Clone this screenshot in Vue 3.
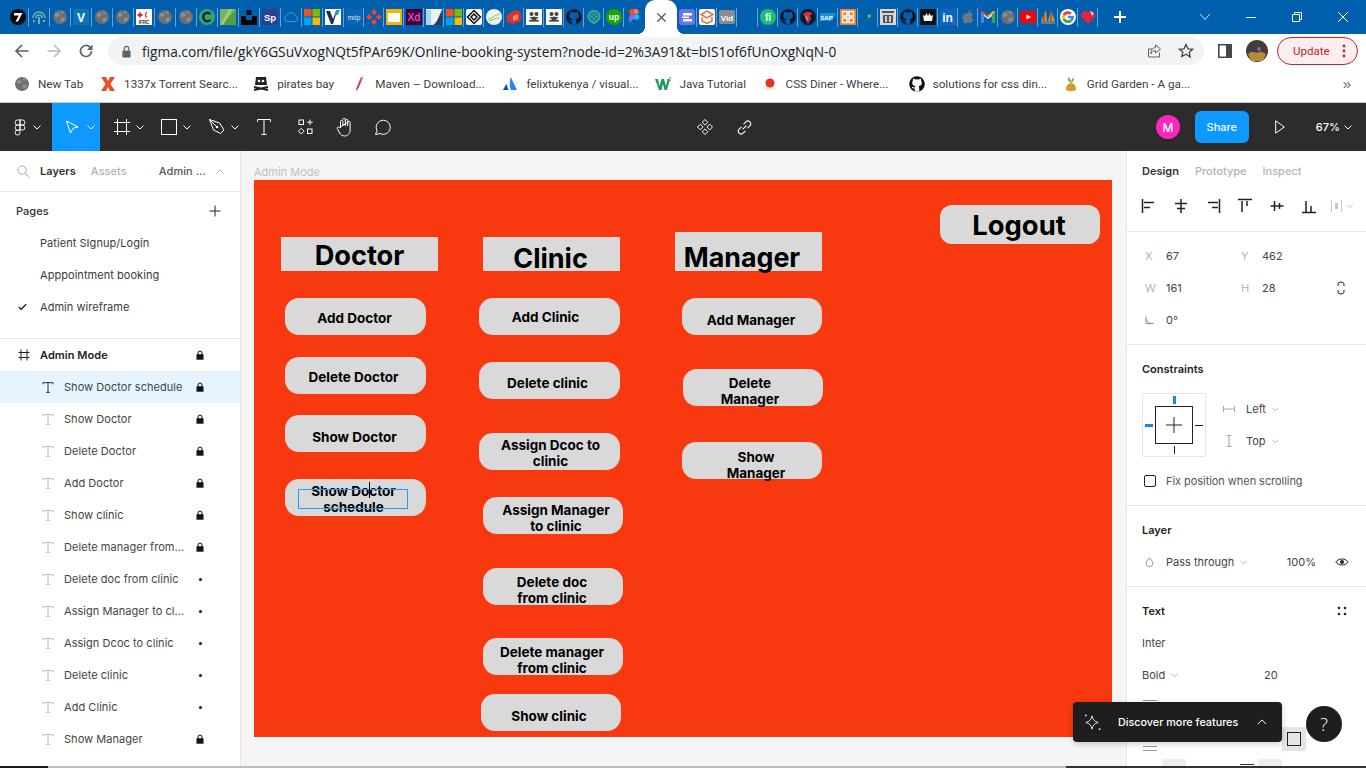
<script setup>
const globe = '<circle cx="8" cy="8" r="7" fill="#6c7075"/><path d="M3 4.5C5 3 6.500 4 7.500 5S6.500 7.500 5 8 2.500 7 3 4.500zM9 9c2-1 4-.5 4 .5s-2 3.500-3 3.500-2-3-1-4zM9 2l3 1-1 2-2-1z" fill="#8c9094"/>'
const bee = '<rect x="0" y="0" width="16" height="16" fill="#fff"/><g fill="#444"><circle cx="5.500" cy="5" r="2"/><circle cx="10.500" cy="5" r="2"/><rect x="4" y="8" width="8" height="1.500"/><rect x="3" y="11" width="10" height="1.500"/><circle cx="8" cy="10" r="2.500"/></g>'
const gh = '<circle cx="8" cy="8" r="7.800" fill="#0b1320"/><path d="M5.800 15.500v-3C3 13 3 11 2.600 10.500c1.200 0 1.700 1.200 3.200.9.100-.7.300-1 .7-1.300C4 9.800 3.200 8.500 3.200 6.800c0-.9.300-1.600.8-2.200-.2-.5-.2-1.300.1-1.900.9 0 1.600.5 2 .9a7 7 0 0 1 3.800 0c.4-.4 1.100-.9 2-.9.300.6.300 1.400.1 1.900.5.600.8 1.300.8 2.200 0 1.700-.8 3-3.300 3.300.5.400.7 1 .7 1.700v3.700z" fill="#0060ae"/>'
const ghDark = gh
const ms = '<rect x="0" y="0" width="7.500" height="7.500" fill="#f25022"/><rect x="8.500" y="0" width="7.500" height="7.500" fill="#7fba00"/><rect x="0" y="8.500" width="7.500" height="7.500" fill="#00a4ef"/><rect x="8.500" y="8.500" width="7.500" height="7.500" fill="#ffb900"/>'

const group1 = [
  '<circle cx="8" cy="8" r="8" fill="#0a0a0a"/><path d="M4 4h8.500L8 12.500H5.500L8.800 6.500H4z" fill="#fff"/>',
  '<g fill="none" stroke="#6fb0ae" stroke-width="1.600"><path d="M2 9a6 6 0 0 1 12 0"/><path d="M5 9a3 3 0 0 1 6 0"/></g><path d="M7 8h2v7H7z" fill="#6fb0ae"/><path d="M2 11h2v2H2zM12 11h2v2h-2z" fill="#6fb0ae"/>',
  globe,
  '<rect x="0" y="0" width="16" height="16" fill="#0b74b8"/><text x="8" y="12.500" font-family="Liberation Sans" font-size="12" font-weight="700" fill="#fff" text-anchor="middle">V</text>',
  globe, globe,
  '<rect x="0" y="0" width="16" height="16" fill="#fff"/><path d="M3 3.500h2v1.500h1.500v2H5v1.500H3V7H1.500V5H3z" fill="#e5262f"/><path d="M11 2.500a3.500 3.500 0 0 0 0 6.500V7.500a2 2 0 0 1 0-3.500z" fill="#e5262f"/><text x="8" y="14.500" font-family="Liberation Sans" font-size="4.600" font-weight="700" fill="#333" text-anchor="middle">IFRC</text>',
  globe, globe,
  '<circle cx="8" cy="8" r="8" fill="#30a66e"/><path d="M11.500 5.200a4.200 4.200 0 1 0 0 5.600" fill="none" stroke="#15243f" stroke-width="2.400"/>',
  '<rect x="0" y="0" width="16" height="16" rx="1" fill="#79b25a"/><path d="M16 0v16H2z" fill="#5e9b47"/><path d="M9 0h4L3 16H0z" fill="#9cc97c"/>',
  '<path d="M5.500 1h5v5h-5zM0 7h5v4h6V7h5v9H0z" fill="#050505"/>',
  '<rect x="0" y="0" width="16" height="16" rx="3" fill="#2d3f8f"/><text x="8" y="11.500" font-family="Liberation Sans" font-size="9.500" font-weight="700" fill="#fff" text-anchor="middle">Sp</text>',
  '<path d="M4.500 12.500a3.200 3.200 0 0 1-.4-6.300A4.500 4.500 0 0 1 12.500 7a2.800 2.800 0 0 1-.5 5.500z" fill="none" stroke="#2da2d8" stroke-width="1"/>',
  ms,
  '<rect x="0" y="0" width="16" height="16" fill="#fff"/><path d="M1 2h4l3 8 3-8h1L8 15H6z" fill="#16325c"/><path d="M11 1h4l-2 5h-3z" fill="#2a9fbc"/>'
]
const group2 = [
  '<rect x="0" y="0" width="16" height="16" fill="#0d63b8"/><text x="8" y="10.500" font-family="Liberation Sans" font-size="6.500" fill="#d6e6f7" text-anchor="middle">mdp</text>',
  '<g fill="#e8472f"><rect x="5.800" y="1" width="4.400" height="4.400" transform="rotate(45 8 3.200)"/><rect x="5.800" y="10.600" width="4.400" height="4.400" transform="rotate(45 8 12.800)"/><rect x="1" y="5.800" width="4.400" height="4.400" transform="rotate(45 3.200 8)"/><rect x="10.600" y="5.800" width="4.400" height="4.400" transform="rotate(45 12.800 8)"/></g>',
  '<rect x="0" y="0" width="16" height="16" fill="#f4b400"/><rect x="2" y="4" width="12" height="9" fill="#fff"/>',
  '<rect x="0" y="0" width="16" height="16" fill="#470137"/><text x="8" y="12" font-family="Liberation Sans" font-size="10.500" fill="#ff61f6" text-anchor="middle">Xd</text>',
  '<rect x="0" y="0" width="16" height="16" fill="#eaf3f8"/><path d="M16 1v15H7c4-2 6-9 9-15z" fill="#23405f"/><path d="M0 1h5v15H0z" fill="#a9d6ec"/>',
  ms,
  '<rect x="0" y="0" width="16" height="16" rx="2" fill="#fff"/><g fill="none" stroke="#111" stroke-width="1.500"><path d="M8 1.500 14.500 8 8 14.500 1.500 8z"/><path d="M8 5 11 8 8 11 5 8z"/></g>',
  '<circle cx="8" cy="8" r="8" fill="#f1f4f6"/><path d="M2 10c4 0 6-4 12-5M3 12c4-1 6-3 10-3" fill="none" stroke="#7cc243" stroke-width="1"/>',
  '<path d="M1 6l8-5 6 2v9l-8 3-6-2z" fill="#d8352a"/><path d="M7 7l5-2v5l-5 2z" fill="#f28b82"/>',
  bee, bee, ghDark,
  '<path d="M8 1a6.500 6.500 0 0 1 4.500 11.200L8 15.500 3.500 12.200A6.500 6.500 0 0 1 8 1z" fill="#37a5a3"/><circle cx="8" cy="7.500" r="4" fill="none" stroke="#0b6d77" stroke-width="1"/><path d="M5.500 5l5 5M10.500 5l-5 5" stroke="#0b6d77" stroke-width="1"/>',
  '<circle cx="8" cy="8" r="8" fill="#14a800"/><text x="8" y="11" font-family="Liberation Sans" font-size="8.500" font-weight="700" fill="#fff" text-anchor="middle">up</text>',
  '<circle cx="10.500" cy="8" r="2.700" fill="#1abcfe"/><path d="M5.300 13.300A2.700 2.700 0 0 0 8 10.700H5.300a2.700 2.700 0 0 0 0 5.300z" fill="#0acf83" transform="translate(0 -2.700)"/><path d="M5.300 5.300H8v5.300H5.300a2.700 2.700 0 0 1 0-5.300z" fill="#a259ff"/><path d="M5.300 0H8v5.300H5.300a2.700 2.700 0 0 1 0-5.300z" fill="#f24e1e"/><path d="M8 0h2.700a2.700 2.700 0 0 1 0 5.300H8z" fill="#ff7262"/>'
]
const group3 = [
  '<rect x="0" y="0" width="16" height="16" rx="3" fill="#6573f0"/><path d="M4 4h9v2.500H4zM3 7.500h7V9H3zM4 10h9v2.500H4z" fill="#fff"/>',
  '<rect x="0" y="0" width="16" height="16" rx="2" fill="#fff"/><path d="M8 2l6 3.500-6 3.500-6-3.500zM3 8v4l5 2.500 5-2.500V8" fill="none" stroke="#ef6a3c" stroke-width="1.500"/>',
  '<rect x="0" y="1" width="16" height="14" rx="2" fill="#8a8d90"/><text x="8" y="11.500" font-family="Liberation Sans" font-size="8" font-weight="700" fill="#fff" text-anchor="middle">Vid</text>'
]
const group4 = [
  '<circle cx="8" cy="8" r="8" fill="#1dbf73"/><text x="8" y="12" font-family="Liberation Sans" font-size="10" font-weight="700" fill="#fff" text-anchor="middle">fi</text>',
  gh,
  '<circle cx="8" cy="8" r="8" fill="#0a1b33"/><path d="M3 5c3-3 7-3 10 0l-3 1 1 4-3 5-2-5-1-2z" fill="#d62f2f"/><path d="M5 7l3 1-1 5z" fill="#7ea6d6"/>',
  '<path d="M0 4h16l-4 8H0z" fill="#1b8fd6"/><text x="6.500" y="10.500" font-family="Liberation Sans" font-size="6" font-weight="700" fill="#fff" text-anchor="middle">SAP</text>',
  '<rect x="0" y="0" width="16" height="16" fill="#f57c2a"/><g fill="none" stroke="#fff" stroke-width="1.500"><rect x="2.500" y="2.500" width="4.500" height="4.500"/><rect x="9" y="2.500" width="4.500" height="4.500"/><rect x="2.500" y="9" width="4.500" height="4.500"/><rect x="9" y="9" width="4.500" height="4.500"/></g>',
  '<path d="M4 14 12 3c1 4-1 8-5 8z" fill="#1f7a3f"/><circle cx="9" cy="7" r="1.300" fill="#6cc"/>',
  '<rect x="0" y="0" width="16" height="16" fill="#d9d9d9"/><path d="M2 2h12v2H2zM3 6h10v8H3z" fill="#555"/><path d="M5 7h2v6H5zM9 7h2v6H9z" fill="#ccc"/>',
  gh,
  '<rect x="0" y="0" width="16" height="16" fill="#111"/><path d="M3 6l2 1 1.500-3L8 7l1.500-3L11 7l2-1-1 6H4z" fill="#f5f5f5"/>',
  '<rect x="0" y="0" width="16" height="16" fill="#0a66c2"/><text x="7.500" y="13" font-family="Liberation Sans" font-size="12" font-weight="700" fill="#fff" text-anchor="middle">in</text><circle cx="14.500" cy="14.500" r="1.300" fill="#e03030"/>',
  '<path d="M8 4.500c1.500-1 4-1 5 .8-2 1.200-1.800 4 .5 5-.7 2-2 4-3.300 4-1 0-1.300-.6-2.200-.6s-1.300.6-2.200.6C3.800 14.300 2.500 11 2.500 8.500c0-3 3-4.800 5.500-4zM8 4c0-1.800 1-3 2.500-3.300C10.600 2.500 9.600 3.800 8 4z" fill="#71767b"/>',
  '<path d="M1 14V3l7 5.500L15 3v11h-3V7L8 10 4 7v7z" fill="#fff"/><path d="M1 14V3l3 2.300V14z" fill="#4285f4"/><path d="M12 14V5.300L15 3v11z" fill="#34a853"/><path d="M1 3c1-1.500 2-1 3 0l4 3.200V8.500z" fill="#ea4335"/><path d="M8 6.200 12 3c1-1 2-1.500 3 0L8 8.500z" fill="#fbbc04"/>',
  globe,
  '<rect x="0" y="2" width="16" height="12" rx="2.500" fill="#f00"/><path d="M6.500 5.500 11 8l-4.500 2.500z" fill="#fff"/>',
  '<path d="M1 12 6 1l1 11zM8 12 11 2l4 10z" fill="#e98e2c"/><path d="M4 5v7M11 4v8" stroke="#234" stroke-width=".8"/><rect x="1" y="12" width="14" height="3" fill="#667aa0"/>',
  '<circle cx="8" cy="8" r="8" fill="#fff"/><path d="M8 5a3 3 0 0 1 2 .8l2-2A6 6 0 0 0 2.600 5.300l2.300 1.800A3.400 3.400 0 0 1 8 5z" fill="#ea4335"/><path d="M4.900 9 2.600 10.700A6 6 0 0 0 8 14c1.500 0 3-.5 4-1.500l-2.200-1.700A3.400 3.400 0 0 1 4.900 9z" fill="#34a853"/><path d="M4.600 8c0-.3.100-.6.300-.9L2.600 5.300a6 6 0 0 0 0 5.400L4.900 9c-.2-.3-.3-.7-.3-1z" fill="#fbbc04"/><path d="M14 8c0-.4 0-.8-.1-1.200H8v2.500h3.400a3 3 0 0 1-1.600 1.500L12 12.500A6 6 0 0 0 14 8z" fill="#4285f4"/>',
  '<path d="M8 15 1.500 8A4 4 0 0 1 8 3.500 4 4 0 0 1 14.500 8z" fill="#e4253c"/><path d="M10 2l4 2-2 3z" fill="#f5c0c6"/>'
]

const bookmarks = [
  { label: 'New Tab', w: 46, svg: globe },
  { label: '1337x Torrent Searc...', w: 113, svg: '<path d="M1 1h5l2 4 2-4h5l-4.500 7L15 15h-5l-2-4-2 4H1l4.500-7z" fill="#e0532a"/>' },
  { label: 'pirates bay', w: 58, svg: '<path d="M3 1h10l1 8H2z" fill="#222"/><circle cx="6" cy="5" r="1.300" fill="#fff"/><circle cx="10" cy="5" r="1.300" fill="#fff"/><path d="M1 11l14 3M15 11 1 14" stroke="#222" stroke-width="2"/>' },
  { label: 'Maven – Download...', w: 111, svg: '<path d="M10 1c2-.5 2 1 1.500 2L7 13l-2 2 .5-3z" fill="#c9374c"/><path d="M10 1l1.500 2-2 3.500z" fill="#f29a3c"/>' },
  { label: 'felixtukenya / visual...', w: 113, svg: '<path d="M8.500 1c2 3 5 10 6.500 13h-6c-1.500-3-1.500-8-.5-13z" fill="#2684ff"/><path d="M4.500 8c1 2 1 4 2 6H1c1-2 2-4 3.500-6z" fill="#0052cc"/>' },
  { label: 'Java Tutorial', w: 66, svg: '<path d="M0 3h3l1.500 7L6.500 3h2.500l2 7L12.500 3H15l-3 11H9.500L8 8l-1.500 6H4z" fill="#1e9c5a"/><text x="14" y="5" font-family="Liberation Sans" font-size="5" font-weight="700" fill="#1e9c5a">3</text>' },
  { label: 'CSS Diner - Where...', w: 107, svg: '<ellipse cx="8" cy="12" rx="7" ry="2.500" fill="#eee"/><circle cx="8" cy="7" r="4.500" fill="#e5331f"/>' },
  { label: 'solutions for css din...', w: 114, svg: gh.replace('#0b1320', '#111').replace('#0060ae', '#fff') },
  { label: 'Grid Garden - A ga...', w: 109, svg: '<path d="M8 7C6 6 4 4 5 1c2 1 3 3 3 6zM8 7c2-1 3-2 3-5-2 0-3 2-3 5z" fill="#7db343"/><path d="M3 13c0-3 2-6 5-6s5 3 5 6-10 3-10 0z" fill="#d9982b"/>' }
]

const pages = [
  { name: 'Patient SIgnup/Login', on: false },
  { name: 'Apppointment booking', on: false },
  { name: 'Admin wireframe', on: true }
]
const layers = [
  { name: 'Show Doctor schedule', lock: true, sel: true },
  { name: 'Show Doctor', lock: true },
  { name: 'Delete Doctor', lock: true },
  { name: 'Add Doctor', lock: true },
  { name: 'Show clinic', lock: true },
  { name: 'Delete manager from...', lock: true },
  { name: 'Delete doc from clinic' },
  { name: 'Assign Manager to cl...' },
  { name: 'Assign Dcoc to clinic' },
  { name: 'Delete clinic' },
  { name: 'Add Clinic' },
  { name: 'Show Manager', lock: true }
]

const FX = 254
const FY = 180
const box = (x1, y1, x2, y2, extra = {}) => ({ x1, y1, x2, y2, dx: 0, dy: 0, ...extra })
const heads = [
  box(281, 237, 438, 271, { t: 'Doctor', size: 27.2, dy: 1.500 }),
  box(483, 237, 620, 271, { t: 'Clinic', size: 27, dx: -1, dy: 4 }),
  box(675, 232, 822, 271, { t: 'Manager', size: 26.8, dy: 6, dx: -6.500 }),
  box(940, 205, 1100, 244, { t: 'Logout', size: 27.4, round: true, dx: -1, dy: 1 })
]
const buttons = [
  box(285, 298, 426, 335, { l: ['Add Doctor'], dx: -1, dy: 1 }),
  box(285, 357, 426, 394, { l: ['Delete Doctor'], dx: -2, dy: 1 }),
  box(285, 415, 426, 452, { l: ['Show Doctor'], dx: -1, dy: 3 }),
  box(285, 479, 426, 516, { l: ['Show Doctor', 'schedule'], dx: -2, dy: 1 }),
  box(479, 298, 620, 335, { l: ['Add Clinic'], dx: -4, dy: 0 }),
  box(479, 362, 620, 399, { l: ['Delete clinic'], dx: -2, dy: 2 }),
  box(479, 433, 620, 470, { l: ['Assign Dcoc to', 'clinic'], dx: 1, dy: 1 }),
  box(483, 497, 623, 534, { l: ['Assign Manager', 'to clinic'], dx: 3, dy: 2 }),
  box(483, 568, 623, 605, { l: ['Delete doc', 'from clinic'], dx: -1, dy: 3 }),
  box(483, 638, 623, 675, { l: ['Delete manager', 'from clinic'], dx: -1, dy: 3 }),
  box(481, 694, 621, 731, { l: ['Show clinic'], dx: -2, dy: 3 }),
  box(682, 298, 822, 335, { l: ['Add Manager'], dx: -1, dy: 3 }),
  box(683, 369, 823, 406, { l: ['Delete', 'Manager'], dx: -3, dy: 3 }),
  box(682, 442, 822, 479, { l: ['Show', 'Manager'], dx: 4, dy: 4 })
]
const place = (b) => ({
  left: b.x1 - FX + 'px',
  top: b.y1 - FY + 'px',
  width: b.x2 - b.x1 + 'px',
  height: b.y2 - b.y1 + 'px'
})
const shift = (b) => ({ transform: `translate(${b.dx}px, ${b.dy}px)`, fontSize: b.size ? b.size + 'px' : undefined })
</script>

<template>
  <div class="screen">
    <div class="tabstrip">
      <div class="tabgroup g1">
        <div v-for="(s, i) in group1" :key="i" class="tab"><svg viewBox="0 0 16 16" width="16" height="16" v-html="s"></svg></div>
      </div>
      <div class="tabgroup g2">
        <div v-for="(s, i) in group2" :key="i" class="tab"><svg viewBox="0 0 16 16" width="16" height="16" v-html="s"></svg></div>
      </div>
      <div class="active-tab">
        <svg viewBox="0 0 12 12" width="11" height="11"><path d="M1.500 1.500l9 9M10.500 1.500l-9 9" stroke="#45484c" stroke-width="1.500" fill="none" /></svg>
      </div>
      <div class="tabgroup g3">
        <div v-for="(s, i) in group3" :key="i" class="tab"><svg viewBox="0 0 16 16" width="16" height="16" v-html="s"></svg></div>
      </div>
      <div class="tabgroup g4">
        <div v-for="(s, i) in group4" :key="i" class="tab"><svg viewBox="0 0 16 16" width="16" height="16" v-html="s"></svg></div>
      </div>
      <svg class="newtab" viewBox="0 0 14 14" width="14" height="14"><path d="M7 1v12M1 7h12" stroke="#fff" stroke-width="2" /></svg>
      <div class="grow"></div>
      <svg class="tablist" viewBox="0 0 12 8" width="12" height="8"><path d="M1 1l5 5.500L11 1" stroke="#d5e3f0" fill="none" /></svg>
      <div class="winbtn"><svg viewBox="0 0 12 12" width="12" height="12"><path d="M1 6.500h10" stroke="#e6eef6" /></svg></div>
      <div class="winbtn"><svg viewBox="0 0 12 12" width="12" height="12"><path d="M1.500 3.500h7v7h-7zM3.500 3.500v-2h7v7h-2" stroke="#fff" fill="none" /></svg></div>
      <div class="winbtn"><svg viewBox="0 0 12 12" width="12" height="12"><path d="M1 1l10 10M11 1L1 11" stroke="#fff" fill="none" /></svg></div>
    </div>

    <div class="addressbar">
      <svg class="nav" viewBox="0 0 16 16" width="16" height="16"><path d="M14.500 8H2M8 2 2 8l6 6" stroke="#5f6368" stroke-width="1.700" fill="none" /></svg>
      <svg class="nav" viewBox="0 0 16 16" width="16" height="16"><path d="M14.500 8H2M8 2 2 8l6 6" stroke="#b8bbbf" stroke-width="1.700" fill="none" transform="matrix(-1 0 0 1 16 0)" /></svg>
      <svg class="nav" viewBox="0 0 16 16" width="16" height="16"><path d="M13.500 8a5.500 5.500 0 1 1-1.600-3.900L13.500 6" stroke="#5f6368" stroke-width="1.700" fill="none" /><path d="M14.500 1.500V7H9z" fill="#5f6368" /></svg>
      <div class="omnibox">
        <svg viewBox="0 0 12 14" width="11" height="13"><path d="M3.500 6V4a2.500 2.500 0 0 1 5 0v2" stroke="#5f6368" stroke-width="1.300" fill="none" /><rect x="1.500" y="6" width="9" height="7.500" rx="1" fill="#5f6368" /></svg>
        <span class="url">figma.com/file/gkY6GSuVxogNQt5fPAr69K/Online-booking-system?node-id=2%3A91&amp;t=bIS1of6fUnOxgNqN-0</span>
        <div class="grow"></div>
        <svg viewBox="0 0 16 16" width="16" height="16"><path d="M13.500 9.500v4.500h-11V6H6M9.500 2l5 4-5 4V7.700C7 7.700 5.500 9 5 11c-.3-4 1.500-6 4.500-6.500z" stroke="#5f6368" fill="none" /></svg>
        <svg class="star" viewBox="0 0 16 16" width="16" height="16"><path d="M8 1.500l2 4.300 4.700.5-3.500 3.200 1 4.600L8 11.300 3.800 13.600l1-4.600L1.300 6.300 6 5.800z" stroke="#45484c" stroke-width="1.300" fill="none" /></svg>
      </div>
      <svg class="sidepanel" viewBox="0 0 14 14" width="14" height="14"><path d="M.8.800h12.400v12.400H.8z" stroke="#45484c" stroke-width="1.600" fill="none" /><rect x="8" y="1" width="5" height="12" fill="#45484c" /></svg>
      <svg class="avatar" viewBox="0 0 22 22" width="22" height="22"><circle cx="11" cy="11" r="11" fill="#4a3a33" /><path d="M2 14c5-4 12-4 18 0l-3 7H5z" fill="#b88a3a" /><path d="M4 5l6 4 6-5 2 6-7 3-7-2z" fill="#27406b" /><circle cx="13" cy="9" r="2" fill="#c7573a" /></svg>
      <div class="update"><span>Update</span><svg viewBox="0 0 4 14" width="4" height="14"><g fill="#c5221f"><circle cx="2" cy="2" r="1.400" /><circle cx="2" cy="7" r="1.400" /><circle cx="2" cy="12" r="1.400" /></g></svg></div>
    </div>

    <div class="bookmarks">
      <div v-for="b in bookmarks" :key="b.label" class="bookmark">
        <svg viewBox="0 0 16 16" width="16" height="16" v-html="b.svg"></svg>
        <span class="bm-label" :style="{ width: b.w + 'px' }">{{ b.label }}</span>
      </div>
      <div class="grow"></div>
      <span class="more">»</span>
    </div>

    <div class="toolbar">
      <div class="tool t-logo">
        <svg viewBox="0 0 12 18" width="12" height="17"><g fill="none" stroke="#fff" stroke-width="1"><path d="M6 1H3.500a2.700 2.700 0 0 0 0 5.400H6zM6 1h2.500a2.700 2.700 0 0 1 0 5.400H6zM6 6.400H3.500a2.700 2.700 0 0 0 0 5.400H6z" /><circle cx="8.500" cy="9.100" r="2.700" /><path d="M3.500 11.800H6v2.700a2.600 2.600 0 1 1-2.500-2.700z" /></g></svg>
        <svg class="chev" viewBox="0 0 8 5" width="8" height="5"><path d="M.5.500 4 4 7.500.500" stroke="#fff" fill="none" /></svg>
      </div>
      <div class="tool t-move">
        <svg viewBox="0 0 14 14" width="14" height="14"><path d="M1.500 1l11.500 6-5 1.300L5.500 13z" stroke="#fff" fill="none" /></svg>
        <svg class="chev" viewBox="0 0 8 5" width="8" height="5"><path d="M.5.500 4 4 7.500.500" stroke="#fff" fill="none" /></svg>
      </div>
      <div class="tool t-frame">
        <svg viewBox="0 0 16 16" width="16" height="16"><path d="M3.500 0v16M12.500 0v16M0 3.500h16M0 12.500h16" stroke="#fff" fill="none" /></svg>
        <svg class="chev" viewBox="0 0 8 5" width="8" height="5"><path d="M.5.500 4 4 7.500.500" stroke="#fff" fill="none" /></svg>
      </div>
      <div class="tool t-rect">
        <svg viewBox="0 0 16 16" width="16" height="16"><rect x=".5" y=".5" width="15" height="15" stroke="#fff" fill="none" /></svg>
        <svg class="chev" viewBox="0 0 8 5" width="8" height="5"><path d="M.5.500 4 4 7.500.500" stroke="#fff" fill="none" /></svg>
      </div>
      <div class="tool t-pen">
        <svg viewBox="0 0 16 16" width="16" height="16"><path d="M.5.500l10 3.500 4.500 7-3.500 3.500-7-3.500zM.5.500l6.500 6.500" stroke="#fff" fill="none" /><circle cx="8" cy="8" r="1.300" fill="#fff" /></svg>
        <svg class="chev" viewBox="0 0 8 5" width="8" height="5"><path d="M.5.500 4 4 7.500.500" stroke="#fff" fill="none" /></svg>
      </div>
      <div class="tool t-icon t-text">
        <svg viewBox="0 0 14 16" width="14" height="16"><path d="M.5 3V.5h13V3M7 .5v15M4.500 15.500h5" stroke="#fff" fill="none" /></svg>
      </div>
      <div class="tool t-icon t-res">
        <svg viewBox="0 0 16 16" width="16" height="16"><g stroke="#fff" fill="none"><rect x="1" y="1" width="4.500" height="4.500" /><path d="M12 .5v5.500M9.200 3.200h5.500M3.200 9.300 6 12.200l-2.800 2.800-2.800-2.800z" /><rect x="9.500" y="10" width="4.500" height="4.500" /></g></svg>
      </div>
      <div class="tool t-icon t-hand">
        <svg viewBox="0 0 18 20" width="18" height="20"><path d="M4.500 11V4.500a1.200 1.200 0 0 1 2.400 0V9m0-6.500a1.200 1.200 0 0 1 2.400 0V9m0-5.500a1.200 1.200 0 0 1 2.400 0V9m0-3.500a1.200 1.200 0 0 1 2.400 0V13c0 3.500-2.500 6-5.500 6-2.700 0-4-1.500-5-3L1.300 11.500c-.6-1.200 1-2 2-1z" stroke="#fff" fill="#2c2c2c" /></svg>
      </div>
      <div class="tool t-icon t-comment">
        <svg viewBox="0 0 18 18" width="18" height="18"><path d="M1.500 16.500 3 12.500A7 7 0 1 1 6 15.500z" stroke="#fff" fill="none" /></svg>
      </div>
      <div class="toolcenter">
        <svg viewBox="0 0 18 18" width="18" height="18"><g stroke="#fff" fill="none"><path d="M9 1.500l2.800 2.800L9 7.100 6.200 4.300z" /><path d="M9 10.900l2.800 2.800L9 16.500l-2.800-2.800z" /><path d="M4.300 6.200 7.100 9l-2.800 2.800L1.500 9z" /><path d="M13.700 6.200 16.500 9l-2.800 2.800L10.900 9z" /></g></svg>
        <svg viewBox="0 0 16 16" width="15" height="15"><g stroke="#fff" fill="none" stroke-width="1.100"><path d="M7 4.500 9.500 2a2.900 2.900 0 0 1 4.200 4.200L11.200 8.700" /><path d="M9 11.500 6.500 14a2.900 2.900 0 0 1-4.200-4.200L4.800 7.300" /><path d="M6 10l4-4" /></g></svg>
      </div>
      <div class="toolright">
        <div class="me">M</div>
        <div class="share">Share</div>
        <svg class="play" viewBox="0 0 10 14" width="10" height="14"><path d="M.7.800 9.300 7 .7 13.200z" stroke="#fff" fill="none" /></svg>
        <div class="zoom">67%</div>
        <svg class="zoomchev" viewBox="0 0 8 5" width="8" height="5"><path d="M.5.500 4 4 7.500.500" stroke="#fff" fill="none" /></svg>
      </div>
    </div>

    <div class="workspace">
      <aside class="left">
        <div class="lefthead">
          <svg viewBox="0 0 14 14" width="13" height="13"><circle cx="5.500" cy="5.500" r="4.500" stroke="#a8a8a8" fill="none" /><path d="M9 9l4.500 4.500" stroke="#a8a8a8" /></svg>
          <span class="lh-layers">Layers</span>
          <span class="lh-assets">Assets</span>
          <span class="lh-page">Admin ...</span>
          <svg class="lh-up" viewBox="0 0 8 5" width="8" height="5"><path d="M.5 4.500 4 1l3.500 3.500" stroke="#b0b0b0" fill="none" /></svg>
        </div>
        <div class="pages">
          <div class="pageshead">
            <span>Pages</span>
            <svg viewBox="0 0 12 12" width="12" height="12"><path d="M6 .5v11M.5 6h11" stroke="#222" /></svg>
          </div>
          <div v-for="p in pages" :key="p.name" class="pagerow">
            <svg v-if="p.on" class="check" viewBox="0 0 10 8" width="9" height="8"><path d="M1 4l2.500 2.500L9 1" stroke="#222" stroke-width="1.500" fill="none" /></svg>
            <span>{{ p.name }}</span>
          </div>
        </div>
        <div class="framerow">
          <svg viewBox="0 0 12 12" width="12" height="12"><path d="M3 .5v11M9 .5v11M.5 3.500h11M.5 8.500h11" stroke="#222" /></svg>
          <span>Admin Mode</span>
          <svg class="lock" viewBox="0 0 8 10" width="8" height="10"><path d="M2 4.500V3a2 2 0 0 1 4 0v1.500" stroke="#111" fill="none" /><rect x="0.500" y="4.200" width="7" height="5.500" fill="#111" /></svg>
        </div>
        <div v-for="l in layers" :key="l.name" class="layer" :class="{ sel: l.sel }">
          <svg class="ticon" viewBox="0 0 12 12" width="12" height="11"><path d="M.5 2.500V.7h11v1.800M6 .7v10.600M4 11.300h4" stroke="currentColor" fill="none" /></svg>
          <span class="lname">{{ l.name }}</span>
          <svg v-if="l.lock" class="lock" viewBox="0 0 8 10" width="8" height="10"><path d="M2 4.500V3a2 2 0 0 1 4 0v1.500" stroke="#111" fill="none" /><rect x="0.500" y="4.200" width="7" height="5.500" fill="#111" /></svg>
          <span v-else class="dot"></span>
        </div>
      </aside>

      <main class="canvas">
        <div class="framelabel">Admin Mode</div>
        <div class="frame">
          <div v-for="h in heads" :key="h.t" class="head" :class="{ round: h.round }" :style="place(h)">
            <span :style="shift(h)">{{ h.t }}</span>
          </div>
          <div v-for="b in buttons" :key="b.l.join()" class="btn" :style="place(b)">
            <span class="btntext" :style="shift(b)"><span v-for="x in b.l" :key="x" class="btnline">{{ x }}</span></span>
          </div>
          <div class="selection"></div>
          <div class="caret"></div>
        </div>
      </main>

      <aside class="right">
        <section class="sec s-tabs">
          <div class="rtabs"><b>Design</b><span>Prototype</span><span>Inspect</span></div>
          <div class="aligns">
            <svg viewBox="0 0 16 16" width="16" height="16"><path d="M1.500 1v14M3 4.500h10M3 9.500h6" stroke="#222" stroke-width="1.500" fill="none" /></svg>
            <svg viewBox="0 0 16 16" width="16" height="16"><path d="M8 1v14M2 5.500h12M4 10.500h8" stroke="#222" stroke-width="1.500" fill="none" /></svg>
            <svg viewBox="0 0 16 16" width="16" height="16"><path d="M14.500 1v14M3 4.500h10M7 9.500h6" stroke="#222" stroke-width="1.500" fill="none" /></svg>
            <svg viewBox="0 0 16 16" width="16" height="16"><path d="M1 1.500h14M5 3v11M10 3v5" stroke="#222" stroke-width="1.500" fill="none" /></svg>
            <svg viewBox="0 0 16 16" width="16" height="16"><path d="M1.500 8h13M5.500 3v10M10.500 5v6" stroke="#222" stroke-width="1.500" fill="none" /></svg>
            <svg viewBox="0 0 16 16" width="16" height="16"><path d="M1 14.500h14M5 3v11M10 8v6" stroke="#222" stroke-width="1.500" fill="none" /></svg>
            <svg class="dist" viewBox="0 0 24 16" width="24" height="16"><path d="M1.500 2v12M11.500 2v12" stroke="#c4c4c4" fill="none" /><path d="M5 5h3v6H5z" fill="#c4c4c4" /><path d="M17 6.500l3 3 3-3" stroke="#c4c4c4" fill="none" /></svg>
          </div>
        </section>
        <section class="sec s-geo">
          <div class="geo">
            <div class="cell"><i>X</i><span>67</span></div>
            <div class="cell"><i>Y</i><span>462</span></div>
          </div>
          <div class="geo">
            <div class="cell"><i>W</i><span>161</span></div>
            <div class="cell"><i>H</i><span>28</span></div>
            <svg class="ratio" viewBox="0 0 8 14" width="8" height="14"><path d="M1 5V3a3 2 0 0 1 6 0v2M1 9v2a3 2 0 0 0 6 0V9" stroke="#222" fill="none" /></svg>
          </div>
          <div class="geo">
            <div class="cell"><i><svg viewBox="0 0 9 8" width="9" height="8"><path d="M1 .5v7h7.500M1 3.500 5 7.500" stroke="#888" fill="none" /></svg></i><span>0°</span></div>
          </div>
        </section>
        <section class="sec s-con">
          <h4>Constraints</h4>
          <div class="conrow">
            <div class="conbox">
              <div class="coninner">
                <svg viewBox="0 0 16 16" width="16" height="16"><path d="M8 0v16M0 8h16" stroke="#222" /></svg>
              </div>
              <span class="mark m-top"></span><span class="mark m-left"></span><span class="mark m-right"></span><span class="mark m-bottom"></span>
            </div>
            <div class="consel">
              <div class="selrow">
                <svg viewBox="0 0 12 8" width="12" height="8"><path d="M.5 1v6M11.500 1v6M.5 4h11" stroke="#aaa" /></svg>
                <span>Left</span>
                <svg viewBox="0 0 8 5" width="7" height="5"><path d="M.5.500 4 4 7.500.500" stroke="#aaa" fill="none" /></svg>
              </div>
              <div class="selrow">
                <svg viewBox="0 0 12 12" width="12" height="12"><path d="M3.500.5h5M3.500 11.500h5M6 .5v11" stroke="#aaa" stroke-width="1.200" /></svg>
                <span>Top</span>
                <svg viewBox="0 0 8 5" width="7" height="5"><path d="M.5.500 4 4 7.500.500" stroke="#aaa" fill="none" /></svg>
              </div>
            </div>
          </div>
          <div class="fixrow"><span class="cb"></span><span>Fix position when scrolling</span></div>
        </section>
        <section class="sec s-layer">
          <h4>Layer</h4>
          <div class="layerrow">
            <svg viewBox="0 0 10 12" width="9" height="11"><path d="M5 1 8 4.500a3.800 3.800 0 1 1-6 0z" stroke="#888" fill="none" /></svg>
            <span>Pass through</span>
            <svg viewBox="0 0 8 5" width="7" height="5"><path d="M.5.500 4 4 7.500.500" stroke="#aaa" fill="none" /></svg>
            <div class="grow"></div>
            <span class="pct">100%</span>
            <svg class="eye" viewBox="0 0 14 10" width="14" height="10"><path d="M.8 5C3.500 1 10.500 1 13.200 5 10.500 9 3.500 9 .8 5z" stroke="#222" fill="none" /><circle cx="7" cy="5" r="2" fill="#222" /></svg>
          </div>
        </section>
        <section class="sec s-text">
          <div class="texthead">
            <h4>Text</h4>
            <svg viewBox="0 0 10 10" width="10" height="10"><g fill="#222"><circle cx="2" cy="2" r="1.300" /><circle cx="8" cy="2" r="1.300" /><circle cx="2" cy="8" r="1.300" /><circle cx="8" cy="8" r="1.300" /></g></svg>
          </div>
          <div class="font">Inter</div>
          <div class="weight">
            <span>Bold</span>
            <svg viewBox="0 0 8 5" width="7" height="5"><path d="M.5.500 4 4 7.500.500" stroke="#aaa" fill="none" /></svg>
            <span class="fsize">20</span>
          </div>
          <div class="behind b-lines"></div>
          <div class="behind b-lines2"></div>
          <div class="behind b-square"><span></span></div>
          <div class="behind b-a"></div>
          <div class="behind b-b"></div>
          <div class="behind b-c"></div>
        </section>
      </aside>
    </div>
    <div class="statusline"></div>

    <div class="toast">
      <svg viewBox="0 0 20 20" width="19" height="19"><path d="M9.500 3c.7 4 2.800 6.200 6.500 7-3.700.8-5.800 3-6.500 7-.7-4-2.800-6.200-6.500-7 3.700-.8 5.800-3 6.500-7z" stroke="#e6e6e6" fill="none" /><circle cx="3" cy="2.500" r="1" fill="#e6e6e6" /><circle cx="17.500" cy="17" r="1" fill="#e6e6e6" /></svg>
      <span>Discover more features</span>
      <svg class="toastchev" viewBox="0 0 12 7" width="10" height="6"><path d="M1 6 6 1l5 5" stroke="#fff" fill="none" stroke-width="1.200" /></svg>
    </div>
    <div class="help">?</div>
  </div>
</template>

<style scoped>
.screen { position: relative; width: 1366px; height: 768px; overflow: hidden; display: flex; flex-direction: column; background: #fff; font-family: Inter, "Liberation Sans", sans-serif; }
.grow { flex: 1; }

.tabstrip { height: 34px; flex: none; background: #0060ae; display: flex; align-items: center; padding-left: 8px; }
.tabgroup { display: flex; height: 34px; align-items: center; }
.tab { height: 19px; display: flex; align-items: center; justify-content: center; border-right: 1px solid #6d9fce; box-sizing: border-box; }
.g1 .tab { width: 21px; }
.g2 .tab { width: 20px; }
.g2 .tab:last-child { border-right: none; }
.g3 .tab, .g4 .tab { width: 20px; }
.g4 { margin-left: 20px; border-left: 1px solid #6d9fce; height: 19px; }
.active-tab { width: 32px; height: 34px; margin: 0 0 0 1px; background: #fff; border-radius: 10px 10px 0 0; display: flex; align-items: center; justify-content: center; position: relative; }
.active-tab::before, .active-tab::after { content: ""; position: absolute; bottom: 0; width: 8px; height: 8px; }
.active-tab::before { left: -8px; background: radial-gradient(circle at 0 0, transparent 8px, #fff 8px); }
.active-tab::after { right: -8px; background: radial-gradient(circle at 100% 0, transparent 8px, #fff 8px); }
.newtab { margin-left: 15px; }
.tablist { margin-right: 17px; }
.winbtn { width: 46px; height: 34px; display: flex; align-items: center; justify-content: center; }

.addressbar { height: 34px; flex: none; display: flex; align-items: center; padding-left: 14px; box-sizing: border-box; background: #fff; }
.nav { margin-right: 16px; }
.omnibox { width: 1096px; height: 28px; margin-left: -2px; border-radius: 14px; background: #f1f3f4; display: flex; align-items: center; padding: 0 8px 0 13px; box-sizing: border-box; }
.url { margin-left: 10px; font: 13.700px "Open Sans", sans-serif; color: #202124; white-space: nowrap; }
.star { margin-left: 16px; margin-right: 2px; }
.sidepanel { margin-left: 14px; }
.avatar { margin-left: 14px; }
.update { margin-left: 9px; width: 81px; height: 28px; box-sizing: border-box; border: 1px solid #c5221f; border-radius: 14px; background: #fbeeee; display: flex; align-items: center; justify-content: space-between; padding: 0 11px 0 15px; font: 11.500px Roboto, sans-serif; color: #c5221f; }

.bookmarks { height: 35px; flex: none; box-sizing: border-box; display: flex; align-items: center; padding: 0 15px 3px 14px; border-bottom: 1px solid #c9c9c9; background: #fff; }
.bookmark { display: flex; align-items: center; gap: 8px; margin-right: 16.100px; font: 11.700px Roboto, sans-serif; color: #3c4043; flex: none; }
.bm-label { white-space: nowrap; display: block; }
.more { font: 15px "Liberation Sans", sans-serif; color: #5f6368; }

.toolbar { height: 48px; flex: none; background: #2c2c2c; display: flex; align-items: center; position: relative; }
.tool { height: 48px; display: flex; align-items: center; justify-content: center; gap: 7px; flex: none; box-sizing: border-box; }
.t-logo { width: 52px; padding-left: 2px; }
.t-move { width: 48px; background: #0d99ff; gap: 8px; padding-left: 8px; }
.t-frame { width: 48px; gap: 6px; padding-left: 9px; }
.t-rect { width: 48px; gap: 6px; padding-left: 8px; }
.t-pen { width: 47px; gap: 6px; padding-left: 8px; }
.t-text { width: 34px; margin-left: 4px; }
.t-icon { flex: none; }
.t-res { width: 48px; padding-left: 2px; }
.t-hand { width: 30px; padding-left: 2px; }
.t-comment { width: 48px; }
.toolcenter { display: flex; gap: 23px; align-items: center; position: absolute; left: 696px; top: 15px; }
.toolright { margin-left: auto; display: flex; align-items: center; padding-right: 14px; color: #fff; }
.me { width: 24px; height: 24px; border-radius: 50%; background: #ff24bd; display: flex; align-items: center; justify-content: center; font-size: 12px; font-weight: 500; }
.share { margin-left: 15px; width: 54px; height: 32px; border-radius: 6px; background: #0d99ff; display: flex; align-items: center; justify-content: center; font-size: 11px; font-weight: 500; }
.play { margin-left: 26px; }
.zoom { margin-left: 31px; font-size: 11px; font-weight: 500; }
.zoomchev { margin-left: 4px; }

.workspace { flex: 1; min-height: 0; display: flex; }
.left { width: 241px; flex: none; box-sizing: border-box; border-right: 1px solid #e5e5e5; background: #fff; font-size: 11px; color: #333; overflow: hidden; letter-spacing: .05px; }
.lefthead { height: 41px; box-sizing: border-box; border-bottom: 1px solid #e5e5e5; display: flex; align-items: center; padding-left: 17px; }
.lh-layers { margin-left: 10px; font-weight: 600; color: #333; }
.lh-assets { margin-left: 15px; color: #b3b3b3; font-weight: 500; }
.lh-page { margin-left: 32px; color: #555; font-weight: 500; }
.lh-up { margin-left: 10px; }
.pages { height: 147px; box-sizing: border-box; border-bottom: 1px solid #e5e5e5; }
.pageshead { height: 35px; padding: 3px 19px 0 16px; box-sizing: border-box; display: flex; align-items: center; justify-content: space-between; font-weight: 500; }
.pagerow { height: 32px; display: flex; align-items: center; padding-left: 40px; position: relative; color: #3a3a3a; }
.check { position: absolute; left: 18px; top: 12px; }
.framerow { height: 32px; display: flex; align-items: center; padding-left: 18px; font-weight: 600; color: #222; position: relative; }
.framerow span { margin-left: 10px; }
.lock { position: absolute; left: 196px; top: 11px; }
.layer { height: 32px; display: flex; align-items: center; padding-left: 42px; position: relative; color: #b3b3b3; }
.layer.sel { background: #e5f4ff; color: #222; }
.lname { margin-left: 10px; color: #444; white-space: nowrap; }
.dot { position: absolute; left: 199px; top: 15px; width: 3px; height: 3px; border-radius: 50%; background: #111; }

.canvas { flex: 1; min-width: 0; background: #f5f5f5; padding: 16px 0 0 13px; box-sizing: border-box; }
.framelabel { height: 13px; font-size: 11px; line-height: 11px; color: #c0c0c0; }
.frame { position: relative; width: 858px; height: 557px; background: #f8390f; }
.head, .btn { position: absolute; background: #d9d9d9; display: flex; align-items: center; justify-content: center; font-family: Inter, sans-serif; font-weight: 700; color: #000; }
.head { line-height: 1; }
.head.round { border-radius: 12px; }
.btn { border-radius: 14px; font-size: 13.500px; line-height: 16px; }
.btntext { display: flex; flex-direction: column; align-items: center; }
.btnline { white-space: nowrap; }
.selection { position: absolute; left: 44px; top: 309px; width: 110px; height: 20px; box-sizing: border-box; border: 1.500px solid #18a0fb; }
.caret { position: absolute; left: 115px; top: 302px; width: 1px; height: 16px; background: #000; }

.right { flex: none; width: 240px; box-sizing: border-box; border-left: 1px solid #e5e5e5; background: #fff; font-size: 11px; color: #444; position: relative; overflow: hidden; }
.sec { box-sizing: border-box; border-bottom: 1px solid #e5e5e5; padding-left: 15px; }
h4 { margin: 0; font-size: 11px; font-weight: 600; color: #222; }
.s-tabs { height: 81px; padding-top: 14px; }
.rtabs { display: flex; gap: 16px; line-height: 13px; color: #b3b3b3; font-weight: 500; }
.rtabs b { font-weight: 600; color: #333; }
.aligns { display: flex; gap: 16px; margin-top: 20px; margin-left: -1px; }
.aligns .dist { margin-left: -3px; }
.s-geo { height: 113px; padding-top: 8px; }
.geo { height: 32px; display: flex; align-items: center; position: relative; }
.cell { width: 96px; display: flex; align-items: center; }
.cell i { width: 24px; font-style: normal; color: #b3b3b3; padding-left: 3px; box-sizing: border-box; }
.ratio { position: absolute; left: 195px; top: 9px; }
.s-con { height: 161px; padding-top: 18px; }
.s-con h4 { line-height: 13px; }
.conrow { display: flex; margin-top: 17px; }
.conbox { width: 64px; height: 64px; box-sizing: border-box; border: 1px solid #e5e5e5; border-radius: 2px; position: relative; display: flex; align-items: center; justify-content: center; }
.coninner { width: 38px; height: 38px; box-sizing: border-box; border: 1px solid #222; display: flex; align-items: center; justify-content: center; }
.mark { position: absolute; background: #222; }
.m-top { left: 30px; top: 2px; width: 3px; height: 8px; background: #0c8ce9; }
.m-left { left: 2px; top: 30px; width: 8px; height: 3px; background: #0c8ce9; }
.m-right { right: 2px; top: 31px; width: 8px; height: 1px; }
.m-bottom { left: 31px; bottom: 2px; width: 1px; height: 8px; }
.consel { margin-left: 17px; }
.selrow { height: 32px; display: flex; align-items: center; }
.selrow span { margin-left: 11px; margin-right: 6px; }
.fixrow { display: flex; align-items: center; margin-top: 17px; color: #555; letter-spacing: -.05px; }
.cb { width: 12px; height: 12px; box-sizing: border-box; border: 1px solid #222; border-radius: 2px; margin-right: 10px; margin-left: 2px; }
.s-layer { height: 81px; padding-top: 18px; }
.s-layer h4 { line-height: 13px; }
.layerrow { height: 32px; margin-top: 9px; display: flex; align-items: center; padding-right: 17px; padding-left: 3px; }
.layerrow span:first-of-type { margin-left: 12px; margin-right: 6px; }
.pct { margin-right: 19px; }
.s-text { height: 200px; border-bottom: none; padding-top: 17px; position: relative; }
.texthead { display: flex; justify-content: space-between; align-items: center; padding-right: 19px; height: 13px; }
.font { margin-top: 20px; line-height: 13px; }
.weight { margin-top: 19px; line-height: 13px; display: flex; align-items: center; gap: 6px; }
.fsize { position: absolute; left: 137px; }
.behind { position: absolute; }
.b-lines { left: 16px; top: 113px; width: 14px; height: 1px; background: #999; }
.b-lines2 { left: 16px; top: 159px; width: 14px; height: 3px; border-top: 1px solid #999; border-bottom: 1px solid #999; }
.b-square { left: 155px; top: 140px; width: 24px; height: 24px; background: #e5e5e5; display: flex; align-items: center; justify-content: center; }
.b-square span { width: 12px; height: 12px; border: 1px solid #222; }
.b-a { left: 35px; top: 172px; width: 24px; height: 10px; background: #eee; }
.b-b { left: 113px; top: 177px; width: 14px; height: 1px; background: #333; }
.b-c { left: 131px; top: 172px; width: 24px; height: 10px; background: #eee; }

.statusline { height: 2px; flex: none; background: linear-gradient(90deg, #1a1a1a 48px, #bdbdbd 48px, #bdbdbd 1066px, #333 1066px); }

.toast { position: absolute; left: 1073px; top: 702px; width: 209px; height: 40px; box-sizing: border-box; background: #1e1e1e; border-radius: 4px; display: flex; align-items: center; padding-left: 10px; color: #fff; font-size: 10.800px; font-weight: 500; box-shadow: 0 2px 6px rgba(0,0,0,.2); }
.toast span { margin-left: 16px; }
.toastchev { margin-left: 19px; }
.help { position: absolute; left: 1306px; top: 706px; width: 36px; height: 36px; border-radius: 50%; background: #1e1e1e; color: #fff; display: flex; align-items: center; justify-content: center; font: 300 18px "Open Sans", sans-serif; }
</style>
